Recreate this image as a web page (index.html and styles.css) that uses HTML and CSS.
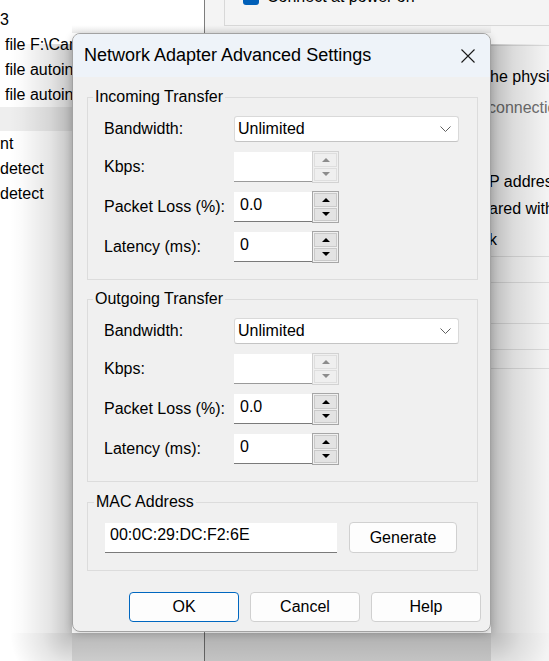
FILE: index.html
```html
<!DOCTYPE html>
<html lang="en">
<head>
<meta charset="utf-8">
<title>Network Adapter Advanced Settings</title>
<link rel="stylesheet" href="styles.css">
</head>
<body>
<div class="app">
  <div class="devices">
    <div class="dev">3</div>
    <div class="dev ind">file F:\Camera\ubuntu-22.04.iso</div>
    <div class="dev ind">file autoinst.iso</div>
    <div class="dev ind">file autoinst.flp</div>
    <div class="dev sel"></div>
    <div class="dev">nt</div>
    <div class="dev">detect</div>
    <div class="dev">detect</div>
  </div>
  <div class="divider"></div>
  <div class="settings">
    <div class="status-box">
      <span class="check"></span>
      <span>Connect at power on</span>
    </div>
    <div class="conn-box">
      <div class="opt r1"><span class="lead">Bridged: Connected directly to t</span>he physical network</div>
      <div class="opt r2 dim"><span class="lead">Replicate physical network </span>connection state</div>
      <div class="opt r4"><span class="lead">NAT: Used to share the host's I</span>P address</div>
      <div class="opt r5"><span class="lead">Host-only: A private network sh</span>ared with the host</div>
      <div class="opt r6"><span class="lead">Custom: Specific virtual networ</span>k</div>
      <div class="ghost-combo c1"></div>
      <div class="ghost-combo c2"></div>
    </div>
  </div>
</div>

<div class="shade"></div>
<div class="dialog">
  <div class="titlebar">
    <span class="title">Network Adapter Advanced Settings</span>
    <svg class="close" width="14" height="14" viewBox="0 0 14 14"><path d="M0.5 0.5L13.5 13.5M13.5 0.5L0.5 13.5" stroke="#1a1a1a" stroke-width="1.1" fill="none"/></svg>
  </div>
  <div class="body">
    <fieldset class="group">
      <legend>Incoming Transfer</legend>
      <div class="form">
        <span class="lbl">Bandwidth:</span>
        <div class="combo"><span>Unlimited</span><svg class="chev" width="11" height="6" viewBox="0 0 11 6"><path d="M0.5 0.5L5.5 5.5L10.5 0.5" stroke="#5f5f5f" stroke-width="1" fill="none"/></svg></div>
        <span class="lbl">Kbps:</span>
        <div class="spin off"><div class="field"></div><div class="btns"><span class="sb"><i class="up"></i></span><span class="sb"><i class="down"></i></span></div></div>
        <span class="lbl">Packet Loss (%):</span>
        <div class="spin"><div class="field">0.0</div><div class="btns"><span class="sb"><i class="up"></i></span><span class="sb"><i class="down"></i></span></div></div>
        <span class="lbl">Latency (ms):</span>
        <div class="spin"><div class="field">0</div><div class="btns"><span class="sb"><i class="up"></i></span><span class="sb"><i class="down"></i></span></div></div>
      </div>
    </fieldset>
    <fieldset class="group">
      <legend>Outgoing Transfer</legend>
      <div class="form">
        <span class="lbl">Bandwidth:</span>
        <div class="combo"><span>Unlimited</span><svg class="chev" width="11" height="6" viewBox="0 0 11 6"><path d="M0.5 0.5L5.5 5.5L10.5 0.5" stroke="#5f5f5f" stroke-width="1" fill="none"/></svg></div>
        <span class="lbl">Kbps:</span>
        <div class="spin off"><div class="field"></div><div class="btns"><span class="sb"><i class="up"></i></span><span class="sb"><i class="down"></i></span></div></div>
        <span class="lbl">Packet Loss (%):</span>
        <div class="spin"><div class="field">0.0</div><div class="btns"><span class="sb"><i class="up"></i></span><span class="sb"><i class="down"></i></span></div></div>
        <span class="lbl">Latency (ms):</span>
        <div class="spin"><div class="field">0</div><div class="btns"><span class="sb"><i class="up"></i></span><span class="sb"><i class="down"></i></span></div></div>
      </div>
    </fieldset>
    <fieldset class="group mac">
      <legend>MAC Address</legend>
      <div class="mac-row">
        <div class="field mac-field">00:0C:29:DC:F2:6E</div>
        <button class="btn gen">Generate</button>
      </div>
    </fieldset>
    <div class="actions">
      <button class="btn default">OK</button>
      <button class="btn">Cancel</button>
      <button class="btn">Help</button>
    </div>
  </div>
</div>
</body>
</html>
```

FILE: styles.css
```css
* { box-sizing: border-box; }
html, body { margin: 0; padding: 0; }
body {
  width: 549px;
  height: 661px;
  overflow: hidden;
  position: relative;
  font-family: "Liberation Sans", Arial, sans-serif;
  font-size: 16px;
  color: #000;
  background: #fff;
}

/* background window */
.app { display: flex; height: 661px; }
.devices { width: 204px; background: #fff; padding-top: 7px; flex: none; }
.dev { height: 25px; line-height: 25px; white-space: nowrap; overflow: hidden; }
.dev.ind { padding-left: 5px; }
.dev.sel { height: 24px; background: #eeeeee; }
.divider { width: 1px; background: #7d7d7d; flex: none; }
.settings { flex: 1; background: #f4f4f4; overflow: hidden; }

.status-box {
  margin: -24px 0 0 19px;
  height: 50px;
  border-left: 1px solid #d8d8d8;
  border-bottom: 1px solid #d8d8d8;
  display: flex;
  align-items: center;
  gap: 8px;
  padding: 0 0 7px 18px;
  white-space: nowrap;
}
.check { width: 16px; height: 16px; border-radius: 3px; background: #005fb8; flex: none; }

.conn-box {
  margin: 19px 0 0 19px;
  height: 324px;
  border-top: 1px solid #dadada;
  border-left: 1px solid #dadada;
  border-bottom: 1px solid #dadada;
  padding: 10px 0 0 14px;
  display: flex;
  flex-direction: column;
  white-space: nowrap;
}
.opt { height: 26px; line-height: 26px; }
.lead { display: inline-block; width: 251px; text-align: right; overflow: hidden; }
.r2 .lead { width: 249px; }
.r4 .lead, .r5 .lead, .r6 .lead { width: 250px; }
.dim { color: #6d6d6d; }
.r2 { margin-top: 5px; }
.r4 { margin-top: 48px; }
.r5 { margin-top: 1px; }
.r6 { margin-top: 5px; }
.ghost-combo { height: 27px; border-top: 1px solid #dadada; border-bottom: 1px solid #dadada; }
.c1 { margin-top: 11px; }
.c2 { margin-top: 40px; }

/* drop shadow of the dialog, painted as gradients over the window below it */
.shade {
  position: absolute;
  left: 0;
  top: 0;
  width: 549px;
  height: 661px;
  pointer-events: none;
  background:
    radial-gradient(circle at 100% 0%, rgba(0,0,0,0.26), rgba(0,0,0,0.1) 30px, rgba(0,0,0,0) 62px) 10px 633px / 62px 28px no-repeat,
    radial-gradient(circle at 0% 0%, rgba(0,0,0,0.24), rgba(0,0,0,0.09) 30px, rgba(0,0,0,0) 60px) 491px 633px / 58px 28px no-repeat,
    linear-gradient(to left, rgba(0,0,0,0.24), rgba(0,0,0,0.1) 22px, rgba(0,0,0,0.02) 50px, rgba(0,0,0,0)) 10px 44px / 62px 589px no-repeat,
    linear-gradient(to right, rgba(0,0,0,0.24), rgba(0,0,0,0.1) 22px, rgba(0,0,0,0.02) 50px, rgba(0,0,0,0)) 491px 44px / 58px 589px no-repeat,
    linear-gradient(to bottom, rgba(0,0,0,0.28), rgba(0,0,0,0.2) 28px) 72px 633px / 419px 28px no-repeat,
    linear-gradient(to top, rgba(0,0,0,0.08), rgba(0,0,0,0)) 72px 25px / 419px 8px no-repeat;
}

/* dialog */
.dialog {
  position: absolute;
  left: 72px;
  top: 33px;
  width: 419px;
  border: 1px solid #a2a2a2;
  border-radius: 8px;
  background: #f0f0f0;
  overflow: hidden;
  box-shadow: 0 2px 8px rgba(0, 0, 0, 0.18);
}
.titlebar {
  height: 43px;
  background: #eef3f9;
  display: flex;
  align-items: center;
  padding: 0 15px 0 11px;
}
.title { font-size: 18px; }
.close { margin-left: auto; }

.body { padding: 11px 12px 9px 14px; }
.group {
  margin: 0 0 10px 0;
  border: 1px solid #dcdcdc;
  padding: 10px 16px 17px 16px;
  min-width: 0;
}
.group legend {
  padding: 0 2px;
  margin-left: -11px;
  line-height: 18px;
  font-size: 16px;
}
.form {
  display: grid;
  grid-template-columns: 130px auto;
  row-gap: 10px;
  align-items: center;
  justify-items: start;
}
.lbl { white-space: nowrap; }

.combo {
  width: 225px;
  height: 26px;
  background: #fff;
  border: 1px solid #d9d9d9;
  border-bottom-color: #c4c4c4;
  border-radius: 3px;
  display: flex;
  align-items: center;
  padding-left: 3px;
}
.chev { margin-left: auto; margin-right: 7px; }

.spin { display: flex; align-items: center; height: 30px; }
.field {
  width: 78px;
  height: 30px;
  background: #fff;
  border-bottom: 1px solid #7a7a7a;
  padding: 0 0 4px 6px;
  display: flex;
  align-items: center;
}
.btns {
  width: 27px;
  height: 32px;
  border: 1px solid #a6a6a6;
  background: #f0f0f0;
  padding: 1px;
  display: flex;
  flex-direction: column;
  gap: 1px;
}
.sb {
  flex: 1;
  background: #e3e3e3;
  border: 1px solid #c9c9c9;
  display: flex;
  align-items: center;
  justify-content: center;
}
.sb i { width: 0; height: 0; border-left: 4px solid transparent; border-right: 4px solid transparent; }
.sb .up { border-bottom: 4px solid #000; }
.sb .down { border-top: 4px solid #000; }
.spin.off .field { border-bottom-color: #9a9a9a; }
.spin.off .btns { border-color: #d2d2d2; }
.spin.off .sb { background: #efefef; border-color: #dedede; }
.spin.off .up { border-bottom-color: #8c8c8c; }
.spin.off .down { border-top-color: #8c8c8c; }

.group.mac { margin-top: 11px; margin-bottom: 0; padding: 11px 16px 17px 17px; }
.mac-row { display: flex; align-items: center; gap: 12px; height: 31px; }
.mac-field { width: 232px; padding-left: 5px; }

.btn {
  font-family: inherit;
  font-size: 16px;
  color: #000;
  background: #fdfdfd;
  border: 1px solid #d0d0d0;
  border-radius: 4px;
  height: 30px;
  width: 110px;
  padding: 0;
}
.btn.gen { width: 108px; height: 31px; }
.btn.default { border-color: #0067c0; }
.actions {
  display: flex;
  justify-content: flex-end;
  gap: 11px;
  margin: 21px -3px 0 0;
}
```
